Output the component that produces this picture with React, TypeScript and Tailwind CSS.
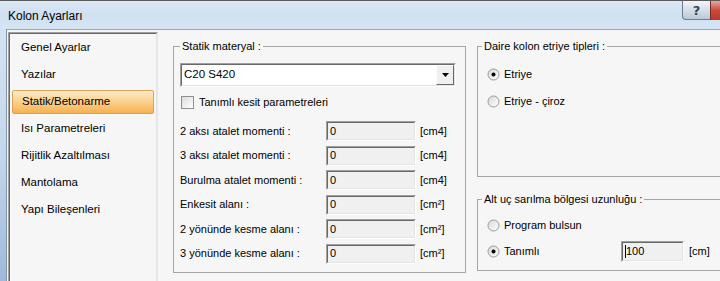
import React from "react";

function Radio({ checked }: { checked?: boolean }) {
  return (
    <svg width="13" height="13" viewBox="0 0 13 13" className="shrink-0">
      <defs>
        <linearGradient id={checked ? "rg1" : "rg0"} x1="0" y1="0" x2="1" y2="1">
          <stop offset="0" stopColor="#d8d8d8" />
          <stop offset="1" stopColor="#ffffff" />
        </linearGradient>
      </defs>
      <circle cx="6.5" cy="6.5" r="5.5" fill={`url(#${checked ? "rg1" : "rg0"})`} stroke="#9a9a9a" strokeWidth="1" />
      {checked && <circle cx="6.5" cy="6.5" r="2" fill="#000" />}
    </svg>
  );
}

function Sunken({ className, children }: { className?: string; children?: React.ReactNode }) {
  return (
    <div className={`border border-t-[#a0a0a0] border-l-[#a0a0a0] border-b-white border-r-white ${className ?? ""}`}>
      <div className="w-full h-full border border-t-[#696969] border-l-[#696969] border-b-[#e3e3e3] border-r-[#e3e3e3] flex items-center">
        {children}
      </div>
    </div>
  );
}

const rows: [string, string][] = [
  ["2 aksı atalet momenti :", "[cm4]"],
  ["3 aksı atalet momenti :", "[cm4]"],
  ["Burulma atalet momenti :", "[cm4]"],
  ["Enkesit alanı :", "[cm²]"],
  ["2 yönünde kesme alanı :", "[cm²]"],
  ["3 yönünde kesme alanı :", "[cm²]"],
];

const items = [
  "Genel Ayarlar",
  "Yazılar",
  "Statik/Betonarme",
  "Isı Parametreleri",
  "Rijitlik Azaltılması",
  "Mantolama",
  "Yapı Bileşenleri",
];

export default function App() {
  return (
    <div className="w-[720px] h-[281px] overflow-hidden flex flex-col bg-[#d2e2f2] font-['Liberation_Sans',Arial,sans-serif] text-black">
      {/* Title bar */}
      <div className="h-[29px] shrink-0 flex items-start border-t border-[#5a5a5a] bg-gradient-to-b from-[#dbe8f5] via-[#cfe0f1] to-[#d6e5f4]">
        <div className="pl-[8px] pt-[8px] text-[12px] leading-[14px]">Kolon Ayarları</div>
        <div className="ml-auto flex items-start">
          <div className="w-[28px] h-[19px] rounded-bl-[4px] border border-t-0 border-r-0 border-[#6f7d8c] bg-gradient-to-b from-[#f3f6f9] via-[#d5dfe8] to-[#b9c9d8] flex items-center justify-center">
            <span className="text-[13px] leading-[13px] font-bold text-[#3b4450] font-['DejaVu_Sans',sans-serif]">?</span>
          </div>
          <div className="w-[10px] h-[19px] border-l border-[#7a2a22] bg-gradient-to-b from-[#e8a59c] via-[#c9473c] to-[#b8382c]" />
        </div>
      </div>

      {/* Body */}
      <div className="flex flex-1 min-h-0">
        <div className="w-[7px] shrink-0 border-r border-[#8394a8] bg-gradient-to-b from-[#d4e3f2] via-[#c3d7ec] to-[#9fb9db]" />
        <div className="flex-1 flex border-t border-[#9aa9b9] bg-[#f6f6f6] min-w-0">
          {/* List box */}
          <div className="ml-[1px] mt-[2px] w-[150px] shrink-0 h-[260px] border border-t-[#a0a0a0] border-l-[#a0a0a0] border-b-white border-r-[#e8e8e8]">
            <div className="w-full h-full border border-t-[#696969] border-l-[#696969] border-b-[#e3e3e3] border-r-[#e3e3e3] pt-[2px] bg-[#f6f6f6]">
              {items.map((it, i) => (
                <div
                  key={it}
                  className={`mx-[2px] h-[24px] mb-[3px] flex items-center pl-[9px] text-[11.5px] ${
                    i === 2
                      ? "rounded-[2px] border border-[#d9a35a] bg-gradient-to-b from-[#fdebc8] via-[#fbd08a] to-[#f6b050] pl-[8px]"
                      : ""
                  }`}
                >
                  {it}
                </div>
              ))}
            </div>
          </div>

          {/* Right content */}
          <div className="flex ml-[15px] items-start text-[11px]">
            {/* Group 1 */}
            <fieldset className="mt-[9px] w-[293px] h-[234px] shrink-0 border border-[#a6a6a6] px-[6px]">
              <legend className="px-[2px] leading-[14px]">Statik materyal :</legend>
              <Sunken className="mt-[10px] w-[276px] h-[24px] bg-white">
                <span className="pl-[2px] flex-1 text-[11.5px]">C20 S420</span>
                <div className="w-[18px] h-full border border-t-white border-l-white border-b-[#696969] border-r-[#696969] bg-[#f0f0f0] flex items-center justify-center">
                  <svg width="7" height="4" viewBox="0 0 7 4">
                    <path d="M0 0H7L3.5 4Z" fill="#000" />
                  </svg>
                </div>
              </Sunken>
              <div className="mt-[9px] flex items-center h-[13px]">
                <div className="ml-[1px] w-[13px] h-[13px] border border-[#8f8f8f] bg-gradient-to-br from-[#dcdcdc] to-[#ffffff]" />
                <span className="ml-[5px]">Tanımlı kesit parametreleri</span>
              </div>
              <div className="mt-[12px] flex flex-col gap-[4.5px]">
                {rows.map(([l, u]) => (
                  <div key={l} className="flex items-center h-[20px]">
                    <span className="w-[146px] shrink-0">{l}</span>
                    <Sunken className="w-[90px] h-[20px] bg-[#f0f0f0]">
                      <span className="pl-[2px]">0</span>
                    </Sunken>
                    <span className="ml-[4px]">{u}</span>
                  </div>
                ))}
              </div>
            </fieldset>

            {/* Right column */}
            <div className="ml-[11px] flex flex-col">
              <fieldset className="mt-[9px] w-[250px] h-[138px] border border-[#a6a6a6] px-[4px]">
                <legend className="px-[2px] leading-[14px]">Daire kolon etriye tipleri :</legend>
                <div className="mt-[15px] pl-[5px] flex items-center h-[13px] gap-[4px]">
                  <Radio checked />
                  <span>Etriye</span>
                </div>
                <div className="mt-[14px] pl-[5px] flex items-center h-[13px] gap-[4px]">
                  <Radio />
                  <span>Etriye - çiroz</span>
                </div>
              </fieldset>

              <fieldset className="mt-[15px] w-[250px] h-[79px] border border-[#a6a6a6] px-[4px]">
                <legend className="px-[2px] leading-[14px]">Alt uç sarılma bölgesi uzunluğu :</legend>
                <div className="mt-[13px] pl-[5px] flex items-center h-[13px] gap-[4px]">
                  <Radio />
                  <span>Program bulsun</span>
                </div>
                <div className="mt-[9px] pl-[5px] flex items-center h-[21px]">
                  <Radio checked />
                  <span className="ml-[4px] w-[117px]">Tanımlı</span>
                  <Sunken className="w-[63px] h-[21px] bg-[#f0f0f0]">
                    <span className="ml-[2px] w-[1px] h-[13px] bg-black" />
                    <span>100</span>
                  </Sunken>
                  <span className="ml-[5px]">[cm]</span>
                </div>
              </fieldset>
            </div>
          </div>
        </div>
      </div>
    </div>
  );
}
